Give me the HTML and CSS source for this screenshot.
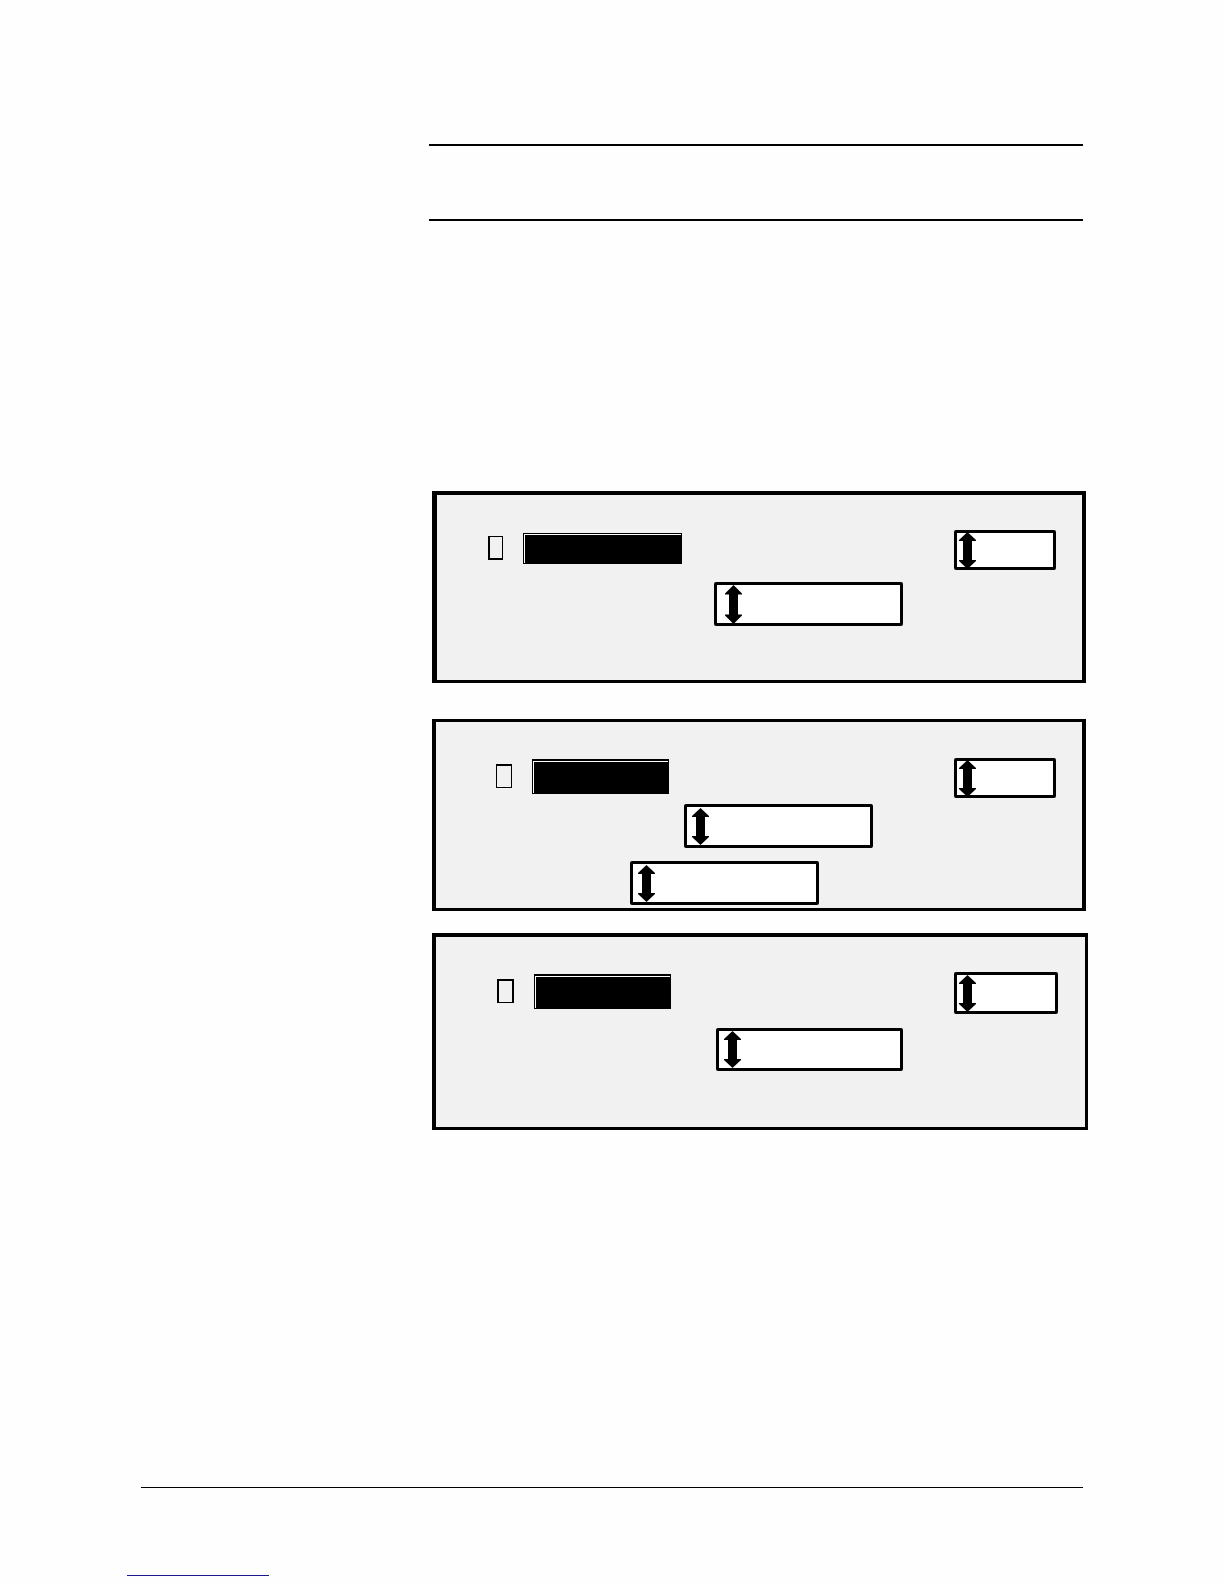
FILE: index.html
```
<!DOCTYPE html>
<html lang="en">
<head>
    <meta charset="UTF-8">
    <meta name="viewport" content="width=device-width, initial-scale=1.0">
    <title>Settings</title>
    <link rel="stylesheet" href="styles.css">
</head>
<body>
    <!-- up/down arrow shared by all the fields -->
    <svg class="defs" width="0" height="0" aria-hidden="true">
        <symbol id="arrow" viewBox="0 0 17 37" preserveAspectRatio="none">
            <path d="M8.5 0 L17 8 V9 H13 V28 H17 V29 L8.5 37 L0 29 V28 H4 V9 H0 V8 Z"/>
        </symbol>
    </svg>

    <main class="content">
        <header class="title"></header>

        <section class="panel panel-first">
            <div class="row">
                <div class="choice">
                    <input type="checkbox" class="check" aria-label="Option">
                    <button type="button" class="bar bar-wide" aria-label="Select"></button>
                </div>
                <div class="field small">
                    <svg class="arrow"><use href="#arrow"/></svg>
                    <input type="text" class="value" aria-label="Value">
                </div>
            </div>
            <div class="field large">
                <svg class="arrow tall"><use href="#arrow"/></svg>
                <input type="text" class="value" aria-label="Value">
            </div>
        </section>

        <section class="panel panel-second">
            <div class="row">
                <div class="choice">
                    <input type="checkbox" class="check" aria-label="Option">
                    <button type="button" class="bar" aria-label="Select"></button>
                </div>
                <div class="field small">
                    <svg class="arrow"><use href="#arrow"/></svg>
                    <input type="text" class="value" aria-label="Value">
                </div>
            </div>
            <div class="field large">
                <svg class="arrow"><use href="#arrow"/></svg>
                <input type="text" class="value" aria-label="Value">
            </div>
            <div class="field large last">
                <svg class="arrow"><use href="#arrow"/></svg>
                <input type="text" class="value" aria-label="Value">
            </div>
        </section>

        <section class="panel panel-third">
            <div class="row">
                <div class="choice">
                    <input type="checkbox" class="check" aria-label="Option">
                    <button type="button" class="bar" aria-label="Select"></button>
                </div>
                <div class="field small">
                    <svg class="arrow"><use href="#arrow"/></svg>
                    <input type="text" class="value" aria-label="Value">
                </div>
            </div>
            <div class="field large">
                <svg class="arrow"><use href="#arrow"/></svg>
                <input type="text" class="value" aria-label="Value">
            </div>
        </section>
    </main>

    <footer class="footer">
        <hr class="rule">
        <a href="#" class="link" aria-label="Back to top"></a>
    </footer>
</body>
</html>
```
FILE: styles.css
```
* {
    box-sizing: border-box;
}

body {
    display: flex;
    flex-direction: column;
    min-height: 100vh;
    margin: 0;
    font-family: "Liberation Sans", Arial, sans-serif;
    background-color: #fefefe;
}

.defs {
    position: absolute;
}

.content {
    padding: 144px 141px 0 429px;
}

.title {
    height: 77px;
    margin-bottom: 270px;
    border-top: 2px solid #000;
    border-bottom: 2px solid #000;
}

/* panels */
.panel {
    margin: 0 -3px 0 3px;
    border: 4px solid #000;
    border-bottom-width: 3px;
    background-color: #f1f1f1;
}

.panel-first {
    padding: 35px 26px 54px 51px;
    border-left-width: 5px;
    margin-bottom: 36px;
}

.panel-second {
    padding: 36px 26px 3px 60px;
    border-top-width: 3px;
    margin-bottom: 22px;
}

.panel-third {
    padding: 35px 27px 56px 61px;
    border-right-width: 3px;
    margin-right: -5px;
}

.row {
    display: flex;
    justify-content: space-between;
    align-items: center;
}

.choice {
    display: flex;
    align-items: center;
    gap: 20px;
    padding-bottom: 4px;
}

.check {
    appearance: none;
    width: 16px;
    height: 24px;
    margin: 0;
    border: 1px solid #000;
    border-radius: 0;
}

.panel-first .check {
    width: 15px;
    border-left-width: 2px;
    border-bottom-width: 2px;
}

.panel-second .check {
    border-top-width: 2px;
}

.panel-third .check {
    width: 17px;
    border-width: 2px 2px 1px;
}

.bar {
    width: 137px;
    height: 35px;
    padding: 0;
    border: 1px solid #000;
    border-top-width: 2px;
    border-radius: 0;
    background-color: #000;
    box-shadow: inset 1px 1px 0 #fff;
}

.bar-wide {
    width: 159px;
    height: 31px;
    border-top-width: 1px;
}

/* boxes with the up/down arrow */
.field {
    display: flex;
    align-items: center;
    border: 3px solid #000;
    border-radius: 2px;
    background-color: #fff;
}

.small {
    width: 102px;
    height: 40px;
    padding-left: 2px;
}

.large {
    width: 189px;
    height: 44px;
    padding-left: 5px;
}

.panel-first .large {
    margin: 12px 0 0 226px;
    padding-left: 8px;
}

.panel-second .large {
    margin: 6px 0 0 188px;
}

.panel-second .last {
    margin: 13px 0 0 134px;
}

.panel-third .small {
    width: 104px;
    height: 42px;
}

.panel-third .large {
    width: 187px;
    height: 43px;
    margin: 14px 0 0 219px;
}

.arrow {
    flex: none;
    width: 17px;
    height: 37px;
}

.tall {
    height: 39px;
}

.value {
    flex: 1;
    min-width: 0;
    padding: 0 4px;
    border: none;
    outline: none;
    background: transparent;
    font-size: 16px;
}

/* footer */
.footer {
    margin-top: auto;
    padding: 0 141px 8px 127px;
}

.rule {
    height: 1px;
    margin: 0 0 87px 14px;
    border: none;
    background-color: #000;
}

.link {
    display: block;
    width: 142px;
    border-bottom: 1px solid #1a1a8c;
}
```
